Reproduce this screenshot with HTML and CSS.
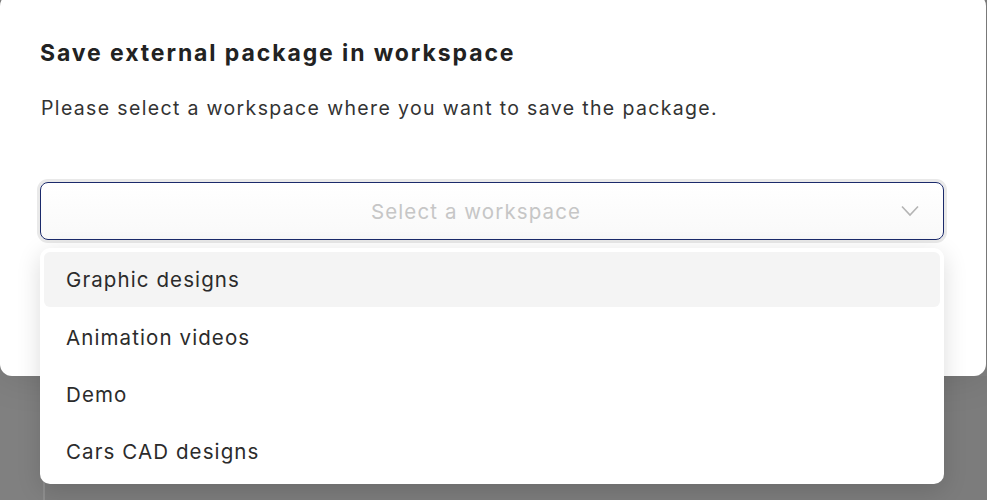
FILE: index.html
```html
<!DOCTYPE html>
<html lang="en">
<head>
<meta charset="utf-8">
<title>Save external package in workspace</title>
<link rel="stylesheet" href="styles.css">
</head>
<body>
<div class="modal">
  <h1 class="title">Save external package in workspace</h1>
  <p class="desc">Please select a workspace where you want to save the package.</p>
  <div class="select-wrap">
    <div class="select">
      <span class="placeholder">Select a workspace</span>
      <svg class="chevron" width="18" height="12" viewBox="0 0 18 12"><path d="M1 1.5 L9 10 L17 1.5" fill="none" stroke="#b4b4b4" stroke-width="1.6"/></svg>
    </div>
    <ul class="menu">
      <li class="item active">Graphic designs</li>
      <li class="item">Animation videos</li>
      <li class="item">Demo</li>
      <li class="item">Cars CAD designs</li>
    </ul>
  </div>
</div>
<div class="behind"></div>
</body>
</html>
```
FILE: styles.css
```css
html, body {
  margin: 0;
  padding: 0;
  height: 100%;
}
body {
  background: #808080;
  font-family: Inter, "Noto Sans", sans-serif;
  overflow: hidden;
}
.modal {
  position: relative;
  z-index: 2;
  width: 986px;
  height: 382px;
  margin-top: -6px;
  box-sizing: border-box;
  background: #fff;
  border-radius: 12px;
  padding: 46px 40px 0 40px;
  box-shadow: 0 0 40px rgba(0,0,0,0.12);
}
.title {
  margin: 0;
  font-size: 23px;
  line-height: 26px;
  font-weight: 700;
  color: #222;
  letter-spacing: 1.9px;
}
.desc {
  margin: 30px 0 0 1px;
  font-size: 19.5px;
  line-height: 24px;
  color: #333;
  font-weight: 400;
  letter-spacing: 1.35px;
}
.select-wrap {
  position: relative;
  margin-top: 62px;
  width: 904px;
}
.select {
  height: 58px;
  box-sizing: border-box;
  border: 1px solid #1b2a6b;
  border-radius: 8px;
  box-shadow: 0 0 0 3px #e9e9e9;
  background: linear-gradient(#ffffff, #f9f9f9);
  display: flex;
  align-items: center;
  justify-content: center;
  padding-right: 32px;
  position: relative;
}
.placeholder {
  font-size: 20.5px;
  color: #c6c6c6;
  font-weight: 400;
  letter-spacing: 1.1px;
}
.chevron {
  position: absolute;
  right: 24px;
  top: 22px;
}
.menu {
  position: absolute;
  left: 0;
  top: 66px;
  width: 904px;
  box-sizing: border-box;
  margin: 0;
  padding: 4px;
  list-style: none;
  background: #fff;
  border-radius: 10px;
  box-shadow: 0 6px 24px rgba(0,0,0,0.14);
}
.item {
  height: 57px;
  display: flex;
  align-items: center;
  padding-left: 22px;
  font-size: 20.5px;
  color: #2b2b2b;
  border-radius: 6px;
  letter-spacing: 1.1px;
}
.item.active {
  background: #f4f4f4;
  height: 55px;
  margin-bottom: 2px;
}
.behind {
  margin-left: 43px;
  height: 124px;
  border-left: 2px solid #8e8e8e;
  background: #7c7c7c;
}
```
